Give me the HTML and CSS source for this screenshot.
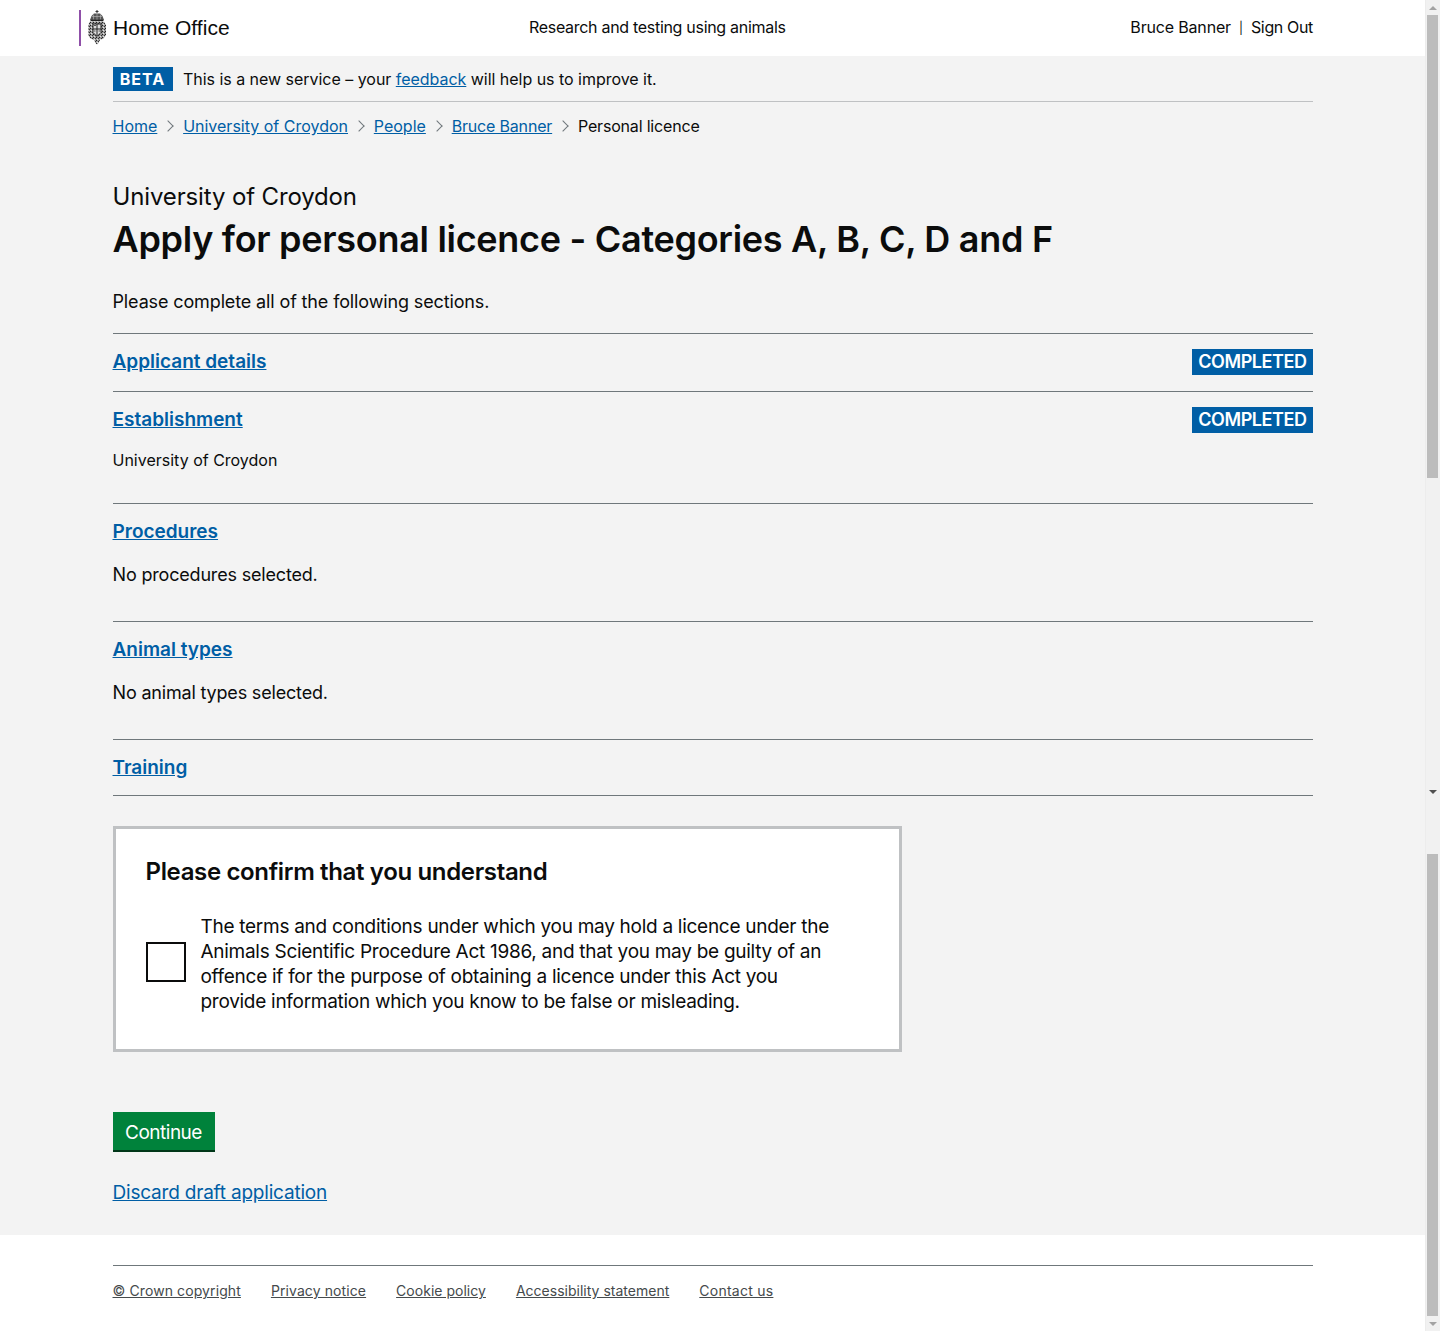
FILE: index.html
```html
<!DOCTYPE html>
<html lang="en">
<head>
<meta charset="utf-8">
<title>Apply for personal licence</title>
<link rel="stylesheet" href="styles.css">
</head>
<body>
<div class="window">
  <div class="page">
    <header class="site-header">
      <div class="brand">
        <svg class="crest" width="20" height="36" viewBox="0 0 20 36" aria-hidden="true">
          <defs>
            <pattern id="speck" width="3" height="3" patternUnits="userSpaceOnUse">
              <rect width="3" height="3" fill="#9a9a9a"/>
              <rect width="1" height="1" fill="#222"/>
              <rect x="2" y="1" width="1" height="1" fill="#333"/>
              <rect x="1" y="2" width="1" height="1" fill="#e4e4e4"/>
            </pattern>
          </defs>
          <path d="M10 0v3M8.500 1.500h3" stroke="#333" stroke-width="1" fill="none"/>
          <path d="M7 3.500h6l2.500 2.500 1.500 4H3l1.500-4z" fill="#555"/>
          <path d="M5 6.500h10M6.500 4.500v5M10 3.500v6.500M13.500 4.500v5" stroke="#bbb" stroke-width=".6"/>
          <path d="M3.500 10.500h13" stroke="#222" stroke-width="1.500"/>
          <path d="M3 11.500h14l2 3.500v10l-2.500 3.500-3.500 1.500-1.500 3-1.500 1.500-1.500-1.500-1.500-3-3.500-1.500L1 25V15z" fill="url(#speck)"/>
          <path d="M6 14h8v8.500l-4 4-4-4z" fill="#dcdcdc" stroke="#222" stroke-width="1"/>
          <path d="M10 14v12M6 19h8" stroke="#222" stroke-width="1"/>
          <path d="M7 15.500h2M11.500 21h1.500M7 21h1.500" stroke="#555" stroke-width="1"/>
        </svg>
        <span class="brand-name">Home Office</span>
      </div>
      <div class="service-name">Research and testing using animals</div>
      <div class="account"><span class="account-name">Bruce Banner</span><span class="sep">|</span><span class="sign-out">Sign Out</span></div>
    </header>

    <main class="main">
      <div class="container">
        <div class="beta"><strong class="beta-tag">BETA</strong><span class="beta-text">This is a new service – your <a href="#">feedback</a> will help us to improve it.</span></div>
        <nav class="crumbs">
          <a href="#">Home</a><span class="chev"></span>
          <a href="#">University of Croydon</a><span class="chev"></span>
          <a href="#">People</a><span class="chev"></span>
          <a class="crumb-tight" href="#">Bruce Banner</a><span class="chev"></span>
          <span class="crumb-tight">Personal licence</span>
        </nav>
        <div class="caption">University of Croydon</div>
        <h1 class="title">Apply for personal licence - Categories A, B, C, D and F</h1>
        <p class="intro">Please complete all of the following sections.</p>

        <section class="row row-a">
          <div class="row-head"><a class="row-link" href="#">Applicant details</a><span class="badge">COMPLETED</span></div>
        </section>
        <section class="row row-b">
          <div class="row-head"><a class="row-link" href="#">Establishment</a><span class="badge">COMPLETED</span></div>
          <p class="row-small">University of Croydon</p>
        </section>
        <section class="row row-c">
          <div class="row-head"><a class="row-link" href="#">Procedures</a></div>
          <p class="row-text">No procedures selected.</p>
        </section>
        <section class="row row-c">
          <div class="row-head"><a class="row-link" href="#">Animal types</a></div>
          <p class="row-text">No animal types selected.</p>
        </section>
        <section class="row row-d">
          <div class="row-head"><a class="row-link" href="#">Training</a></div>
        </section>

        <section class="confirm">
          <h2 class="confirm-title">Please confirm that you understand</h2>
          <label class="confirm-line">
            <span class="box"></span>
            <span class="confirm-text">The terms and conditions under which you may hold a licence under the Animals Scientific Procedure Act 1986, and that you may be guilty of an offence if for the purpose of obtaining a licence under this Act you provide information which you know to be false or misleading.</span>
          </label>
        </section>

        <button class="continue" type="button">Continue</button>
        <a class="discard" href="#">Discard draft application</a>
      </div>
    </main>

    <footer class="site-footer">
      <div class="container footer-links">
        <a href="#">© Crown copyright</a>
        <a href="#">Privacy notice</a>
        <a href="#">Cookie policy</a>
        <a href="#">Accessibility statement</a>
        <a href="#">Contact us</a>
      </div>
    </footer>
  </div>

  <div class="scrollbar" aria-hidden="true">
    <div class="arrow-slot"><span class="arrow up"></span></div>
    <div class="thumb"></div>
    <div class="gap"></div>
    <div class="arrow-slot"><span class="arrow down dark"></span></div>
    <div class="gap-2"></div>
    <div class="thumb thumb-2"></div>
    <div class="arrow-slot"><span class="arrow down"></span></div>
  </div>
</div>
</body>
</html>
```
FILE: styles.css
```css
* { box-sizing: border-box; }
html, body { margin: 0; padding: 0; height: 1331px; overflow: hidden; }
body { font-family: Inter, "Liberation Sans", sans-serif; color: #0b0c0c; background: #fff; }
a { color: #005ea5; }

.window { display: flex; height: 1331px; }
.page { flex: 1 1 auto; min-width: 0; display: flex; flex-direction: column; }

.site-header { height: 56px; background: #fff; display: flex; align-items: center; justify-content: space-between; padding: 0 112px 2px 79px; font-size: 16px; }
.brand { display: flex; align-items: center; height: 36px; margin-top: 2px; border-left: 2px solid #8f4fa8; padding-left: 6px; width: 450px; }
.crest { flex: none; }
.brand-name { font-family: "Liberation Sans", Arial, sans-serif; font-size: 21px; margin-left: 6px; color: #0b0c0c; letter-spacing: .03px; }
.service-name { flex: 1; letter-spacing: -.3px; }
.account { display: flex; align-items: center; gap: 8px; }
.account-name { letter-spacing: -.17px; }
.sign-out { letter-spacing: -.35px; }
.sep { width: 4px; font-size: 12px; line-height: 19px; text-align: center; }

.main { flex: 1; background: #f3f3f3; }
.container { width: 1200px; margin: 0 auto; }

.beta { display: flex; align-items: center; gap: 10.500px; height: 46px; padding-top: 1px; border-bottom: 1px solid #bfc1c3; font-size: 16px; }
.beta-tag { background: #005ea5; color: #fff; width: 60px; height: 24px; line-height: 24px; text-align: center; font-size: 16px; font-weight: 700; letter-spacing: 1px; }
.beta-text { letter-spacing: -.03px; }

.crumbs { display: flex; align-items: center; height: 48px; font-size: 16px; }
.crumb-tight { letter-spacing: -.18px; }
.chev { width: 25.800px; height: 12px; position: relative; }
.chev::before { content: ""; position: absolute; left: 7px; top: 2px; width: 7px; height: 7px; border-top: 1px solid #6f777b; border-right: 1px solid #6f777b; transform: rotate(45deg); }

.caption { margin-top: 32px; font-size: 24px; line-height: 30px; letter-spacing: -.14px; }
.title { margin: 5px 0 0; font-size: 36px; line-height: 45px; font-weight: 600; letter-spacing: -.29px; }
.intro { margin: 27px 0 19px; font-size: 18px; line-height: 25px; letter-spacing: -.13px; }

.row { border-top: 1px solid #6f777b; }
.row-head { display: flex; align-items: center; justify-content: space-between; padding-top: 14px; }
.row-link { font-size: 19px; line-height: 27px; font-weight: 600; }
.badge { background: #005ea5; color: #fff; font-size: 18px; line-height: 26px; font-weight: 600; padding: 0 6px; letter-spacing: -.44px; }
.row-a { height: 58px; }
.row-b { height: 112px; }
.row-c { height: 118px; }
.row-d { height: 57px; border-bottom: 1px solid #6f777b; }
.row-small { margin: 15px 0 0; font-size: 16px; line-height: 25px; }
.row-text { margin: 17px 0 0; font-size: 18px; line-height: 25px; letter-spacing: -.18px; }

.confirm { width: 789px; height: 226px; margin-top: 30px; background: #fff; border: 3px solid #bfc1c3; padding: 28px 30px 0; }
.confirm-title { margin: 0; font-size: 24px; line-height: 30px; font-weight: 600; letter-spacing: -.35px; }
.confirm-line { display: flex; align-items: center; margin-top: 27px; }
.box { flex: none; width: 40px; height: 40px; border: 2px solid #0b0c0c; background: #fff; margin: 0 15px 4px 0; }
.confirm-text { font-size: 19px; line-height: 25px; width: 630px; letter-spacing: -.28px; }

.continue { display: block; width: 102px; height: 40px; margin-top: 60px; border: 0; border-bottom: 2px solid #003618; background: #00823b; color: #fff; font: 19px/34px Inter, sans-serif; padding: 4px 0 0; letter-spacing: -.5px; }
.discard { display: inline-block; margin-top: 28px; font-size: 19px; line-height: 25px; letter-spacing: -.2px; }

.site-footer { height: 96px; background: #fff; padding-top: 30px; }
.footer-links { display: flex; gap: 30px; border-top: 1px solid #6f777b; padding-top: 15px; font-size: 14px; line-height: 20px; letter-spacing: .1px; }
.footer-links a { color: #454a4c; }
.footer-links a:nth-child(3) { letter-spacing: .02px; }
.footer-links a:nth-child(4) { letter-spacing: .01px; }
.footer-links a:nth-child(5) { letter-spacing: .25px; }

.scrollbar { flex: none; width: 15px; height: 1331px; background: #f1f1f1; display: flex; flex-direction: column; align-items: flex-start; border-left: 1px solid #ececec; }
.arrow-slot { flex: none; height: 15px; width: 100%; display: flex; align-items: center; justify-content: center; }
.arrow { width: 0; height: 0; border-left: 4px solid transparent; border-right: 4px solid transparent; }
.arrow.up { border-bottom: 4px solid #a3a3a3; }
.arrow.down { border-top: 4px solid #a3a3a3; }
.arrow.dark { border-top-color: #505050; }
.thumb { flex: none; width: 11px; height: 463px; background: #bcbcbc; margin-left: 1px; }
.thumb-2 { flex: 1; height: auto; }
.gap { flex: none; height: 306px; }
.gap-2 { flex: none; height: 55px; }
```
